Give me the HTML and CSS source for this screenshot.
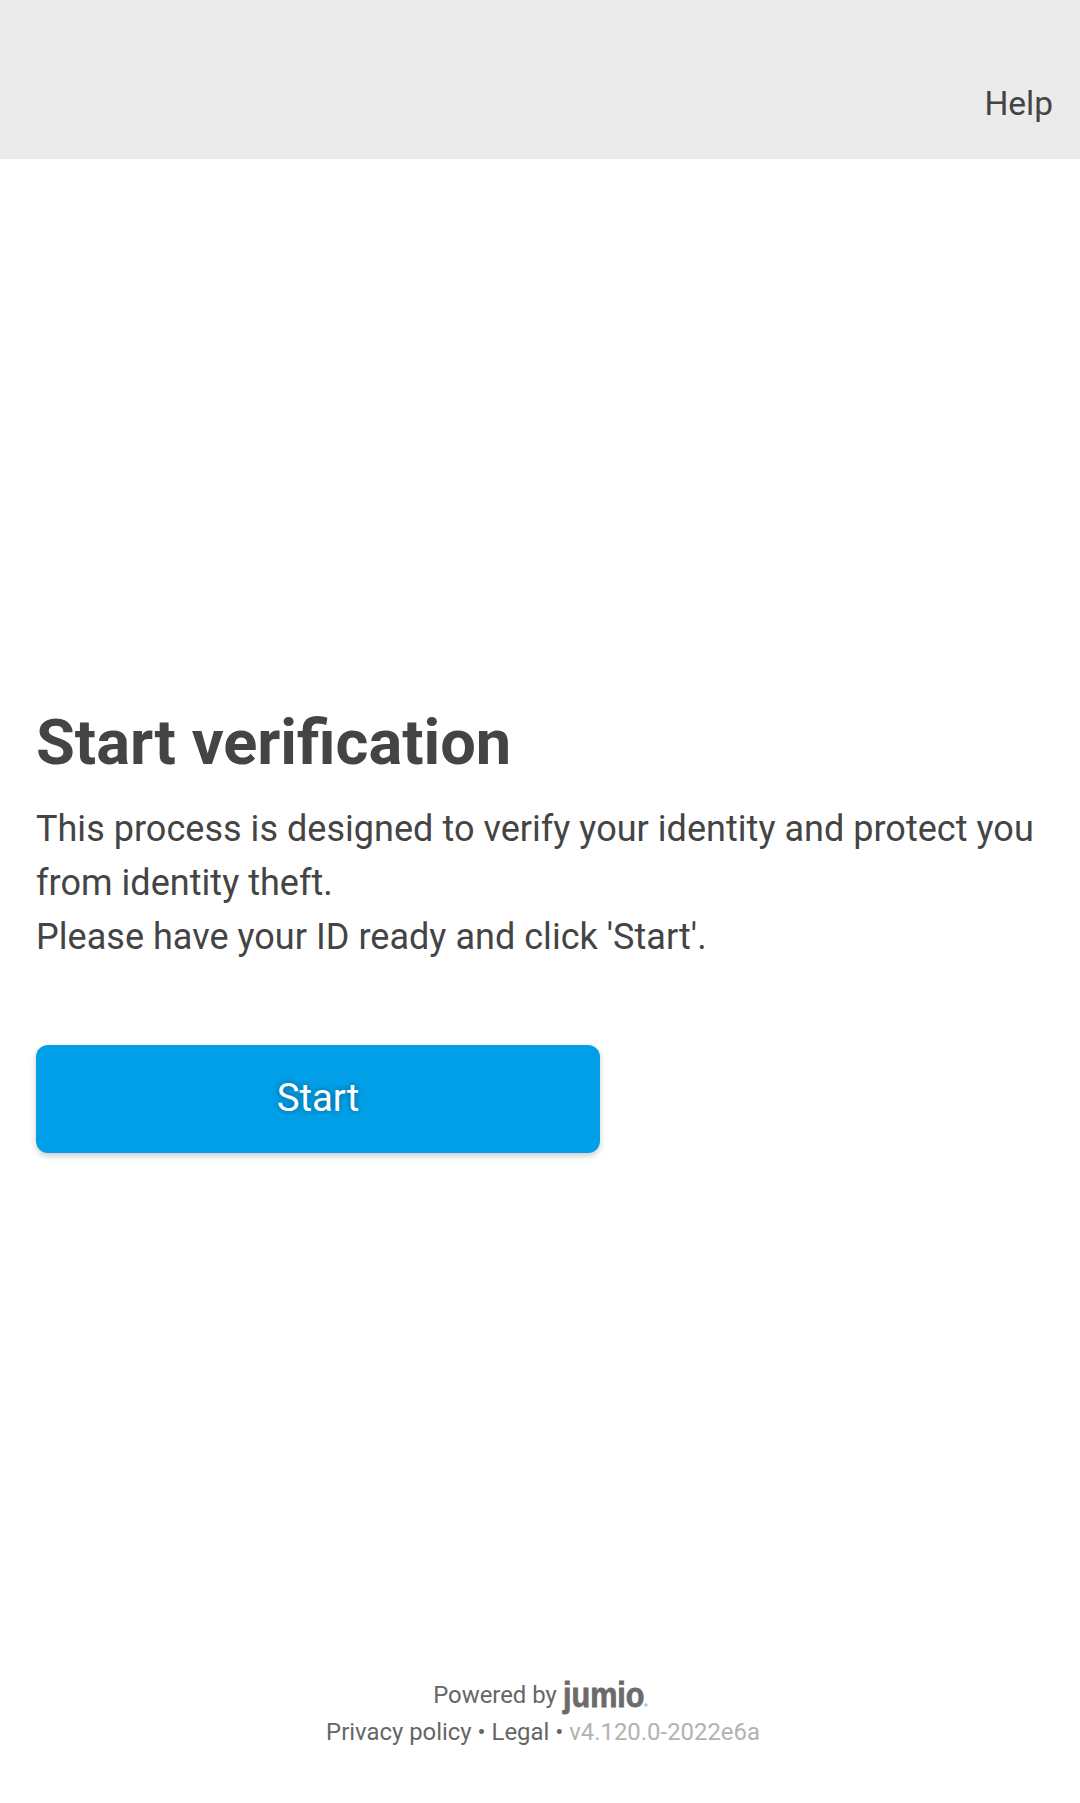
FILE: index.html
```html
<!DOCTYPE html>
<html lang="en">
<head>
<meta charset="utf-8">
<title>Start verification</title>
<link rel="stylesheet" href="styles.css">
</head>
<body>
<header class="header"><a class="help">Help</a></header>
<main class="content">
<h1 class="title">Start verification</h1>
<p class="copy">This process is designed to verify your identity and protect you from identity theft.<br>Please have your ID ready and click 'Start'.</p>
<button class="start" type="button">Start</button>
</main>
<footer class="footer">
<div class="powered"><span>Powered by</span><svg class="brand" width="85" height="37" viewBox="0 0 85 37"><text x="0" y="29.5" textLength="81.5" lengthAdjust="spacingAndGlyphs">jumio</text><circle cx="82.8" cy="28" r="1.2"/></svg></div>
<div class="links">Privacy policy • Legal • <span class="version">v4.120.0-2022e6a</span></div>
</footer>
</body>
</html>
```
FILE: styles.css
```css
* { box-sizing: border-box; }
body { margin: 0; height: 1803px; display: flex; flex-direction: column; background: #fff; color: #444; font-family: Roboto, sans-serif; overflow: hidden; }
.header { height: 159px; flex: none; background: #ebebeb; display: flex; justify-content: flex-end; padding: 80px 27px 0 0; }
.help { font-size: 33.5px; line-height: 48px; }
.content { flex: 1; padding: 547px 36px 0; }
.title { margin: 0; font-size: 63.1px; line-height: 72px; font-weight: 700; }
.copy { margin: 24px 0 0; font-size: 36px; line-height: 54px; letter-spacing: .033px; }
.start { display: block; margin-top: 81px; width: 564px; height: 108px; padding: 0 0 2px; border: 0; border-radius: 12px; background: #009fe8; color: #fff; font: 400 38.4px/106px Roboto, sans-serif; text-shadow: 0 0 6px rgba(0,0,0,.4); box-shadow: 0 3px 6px rgba(0,0,0,.2); }
.footer { flex: none; height: 126px; color: #666; font-size: 23.9px; line-height: 36px; }
.powered { display: flex; justify-content: center; height: 37px; gap: 6px; padding-left: 1px; }
.brand { display: block; overflow: visible; fill: #6b6b6b; stroke: #6b6b6b; stroke-width: .8; font: 700 34.5px "Liberation Sans", sans-serif; }
.brand circle { fill: none; stroke: #aaa; stroke-width: 1; }
.links { text-align: center; padding-left: 6px; }
.version { color: #b2b2b2; }
```
